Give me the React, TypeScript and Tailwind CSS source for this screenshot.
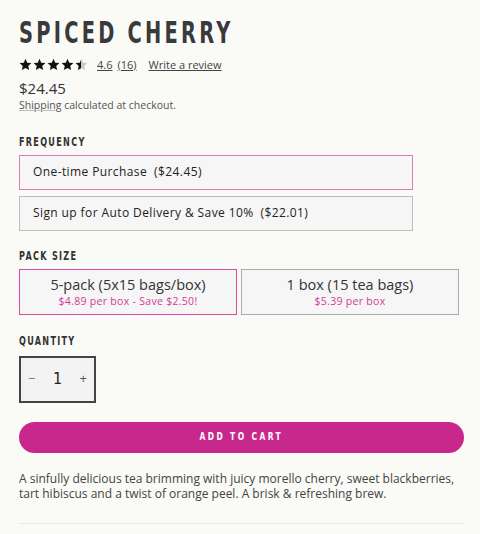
import React from 'react';

const head = { fontFamily: '"DejaVu Sans Condensed", "DejaVu Sans", sans-serif' };
const body = { fontFamily: '"Open Sans", "Noto Sans", "Liberation Sans", sans-serif' };

const Star: React.FC<{ fill: 'full' | 'half' }> = ({ fill }) => (
  <svg width="13" height="13" viewBox="0 0 24 24" className="shrink-0">
    <defs>
      <linearGradient id="half-grad">
        <stop offset="50%" stopColor="#111" />
        <stop offset="50%" stopColor="#c9c9c9" />
      </linearGradient>
    </defs>
    <path
      d="M12 1.5l3.1 7.2 7.8.7-5.9 5.2 1.8 7.7L12 18.3l-6.8 4 1.8-7.7-5.9-5.2 7.8-.7z"
      fill={fill === 'full' ? '#111' : 'url(#half-grad)'}
    />
  </svg>
);

const Label: React.FC<{ children: React.ReactNode }> = ({ children }) => (
  <div
    style={head}
    className="origin-left scale-x-[0.72] whitespace-nowrap text-[12.5px] font-bold leading-[12.5px] tracking-[1.8px] text-[#333]"
  >
    {children}
  </div>
);

export default function App() {
  return (
    <div style={body} className="min-h-[534px] w-[480px] bg-[#fafaf6] pl-[19px] pr-[16px] pt-[18px] text-[#333]">
      <h1
        style={head}
        className="origin-left scale-x-[0.72] whitespace-nowrap text-[30px] font-bold leading-[30px] tracking-[4.5px] text-[#3a3a3c]"
      >
        SPICED CHERRY
      </h1>

      <div className="mt-[10px] flex h-[13px] items-center text-[11px] leading-[13px] text-[#444]">
        <div className="flex gap-[1px]">
          <Star fill="full" />
          <Star fill="full" />
          <Star fill="full" />
          <Star fill="full" />
          <Star fill="half" />
        </div>
        <span className="ml-[9px] underline">4.6</span>
        <span className="ml-[5px] underline">(16)</span>
        <span className="ml-[12px] underline">Write a review</span>
      </div>

      <div className="mt-[8px] text-[15px] leading-[19px] text-[#333]">$24.45</div>
      <div className="text-[10.5px] leading-[14px] text-[#555]">
        <span className="underline decoration-[#bbb]">Shipping</span> calculated at checkout.
      </div>

      <div className="mt-[23.5px]">
        <Label>FREQUENCY</Label>
        <div className="mt-[6.5px] flex w-[394px] flex-col gap-[6px]">
          <div className="flex h-[35px] items-center border-[1.5px] border-[#e07ab4] bg-[#f6f6f6] pl-[13px] text-[12px] tracking-[0.4px] text-[#222]">
            One-time Purchase&nbsp;&nbsp;($24.45)
          </div>
          <div className="flex h-[35px] items-center border-[1.5px] border-[#bdbdbd] bg-[#f6f6f6] pl-[13px] text-[12px] tracking-[0.4px] text-[#222]">
            Sign up for Auto Delivery &amp; Save 10%&nbsp;&nbsp;($22.01)
          </div>
        </div>
      </div>

      <div className="mt-[19.5px]">
        <Label>PACK SIZE</Label>
        <div className="mt-[6px] flex w-[440px] gap-[4px]">
          <div className="flex h-[46px] flex-1 flex-col items-center justify-center border-[1.5px] border-[#d9479e] bg-[#f6f6f6]">
            <div className="text-[14.5px] leading-[18px] text-[#333]">5-pack (5x15 bags/box)</div>
            <div className="text-[10.5px] leading-[14px] tracking-[0.3px] text-[#d23a98]">$4.89 per box - Save $2.50!</div>
          </div>
          <div className="flex h-[46px] flex-1 flex-col items-center justify-center border-[1.5px] border-[#a9abb3] bg-[#f6f6f6]">
            <div className="text-[14.5px] leading-[18px] text-[#333]">1 box (15 tea bags)</div>
            <div className="text-[10.5px] leading-[14px] tracking-[0.3px] text-[#d23a98]">$5.39 per box</div>
          </div>
        </div>
      </div>

      <div className="mt-[20.5px]">
        <Label>QUANTITY</Label>
        <div className="mt-[8px] flex h-[47px] w-[77px] items-center justify-between border-2 border-[#444] bg-[#f3f3f3] px-[7px] text-[#555]">
          <span className="text-[13px] text-[#777]">−</span>
          <span style={head} className="text-[16px] text-[#222]">1</span>
          <span className="text-[13px] text-[#555]">+</span>
        </div>
      </div>

      <button className="mt-[19px] flex h-[31px] w-[445px] items-center justify-center rounded-full bg-[#c8288c] text-white">
        <span
          style={head}
          className="inline-block scale-x-[0.8] whitespace-nowrap text-[10.5px] font-bold tracking-[3px]"
        >
          ADD TO CART
        </span>
      </button>

      <p className="mt-[18.5px] w-[445px] text-[12px] leading-[15px] text-[#444]">
        A sinfully delicious tea brimming with juicy morello cherry, sweet blackberries, tart hibiscus and a twist of orange peel. A brisk &amp; refreshing brew.
      </p>

      <div className="mt-[21.5px] h-px w-[445px] bg-[#ece5da]" />
    </div>
  );
}
